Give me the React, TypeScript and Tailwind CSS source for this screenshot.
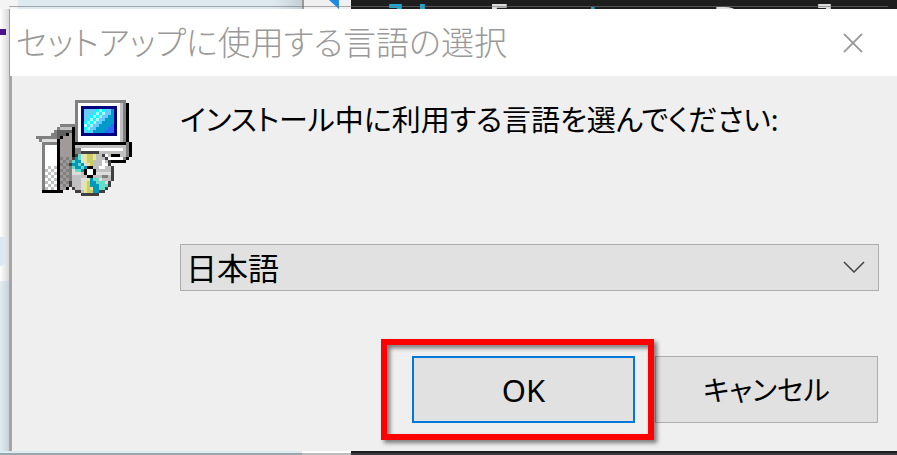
import { X } from 'lucide-react';

const INSTALLER_ROWS = [
  '.............GGGGGGGGGGGGGGGGG..',
  '.............GWWWWWWWWWWWWWWSGK.',
  '.............GWNNNNNNNNNNNNWSGK.',
  '.............GWNbbbbCwCbbBNWSGK.',
  '.............GWNbbbCwCwbbBNWSGK.',
  '.............GWNbbCwCwbbBBNWSGK.',
  '.............GWNbCwCwbbBBBNWSGK.',
  '.............GWNCwCwbbBBBBNWSGK.',
  '........GGGGGGWNwCwbbBBBBUNWSGK.',
  '.......GSSSSKGWNCwbbBBBBUUNWSGK.',
  '......GDDDDDKGWNbCbBBBBUUUNWSGK.',
  '.....GGDDDKMKGWNNNNNNNNNNNNWSGK.',
  'GGGGGGGDKMMMKGWWWWWWWWWWWWWWSGK.',
  '.GLLLLLKMMMMKGWWWWWWWWWWWWWWSGK.',
  '..GGGGGKMMMMKKKKKKKKKKKKKKKKKKGK',
  '..GWWWWKMMMMKSSSSSSSSSSSSSSSSSGK',
  '..GWWWWKMMMMKGGWWWWWWWWWWWWWWSGK',
  '..GWWWWKMMMMKGGQQQQQQSSSSSSSSSGK',
  '..GWWWWKMMMMKQALyYYySSQWSKKKSSGK',
  '..GWWWWKGMGMQTALyYYySSSQWWWWWGK.',
  '..GWWWWKMGMGATTLyYYSSSWSQKKKKK..',
  '..GWWWWKGMGQTTATLyYSSSWWQ.......',
  '..GWSWSKMGMGATTATKKSSWWSSQ......',
  '..GSWSWKGMGGLAATKWWKSSSSSQ......',
  '..GWSWSKMGMGLLLSKWWKLLLLLQ......',
  '..GSWSWKGMGGSSSSSKKSSSGGSQ......',
  '..GWSWSKMGMGSSSLLyTAALSSSQ......',
  '..GSWSWKGMGQSSSLyYTTAAALQ.......',
  '..GWSWSKMGMQSSSLyYTTTAAAQ.......',
  '..GSWSWKMMK.QSSLyYyTTAAQ........',
  '..KKKKKKK....QQSyYYTTQQ.........',
  '...............QQQQQQ...........',
];

const INSTALLER_COLORS: Record<string, string> = {
  K: '#000000',
  Q: '#404040',
  D: '#606060',
  G: '#808080',
  M: '#a09a9a',
  S: '#c0c0c0',
  L: '#dddddd',
  W: '#ffffff',
  N: '#000080',
  b: '#66ccff',
  B: '#0099cc',
  C: '#00ffff',
  w: '#b8f8ff',
  U: '#3366ff',
  T: '#0099bb',
  A: '#66dcc4',
  Y: '#cccc66',
  y: '#e6e69a',
};

function InstallerIcon() {
  return (
    <svg viewBox="0 0 32 32" className="size-24 shrink-0" shapeRendering="crispEdges" aria-hidden="true">
      {INSTALLER_ROWS.map((row, y) =>
        row.split('').map((key, x) =>
          key === '.' ? null : (
            <rect key={`${x}-${y}`} x={x} y={y} width="1" height="1" fill={INSTALLER_COLORS[key]} />
          )
        )
      )}
    </svg>
  );
}

function EditorEdge() {
  return (
    <div className="relative flex h-[9px] overflow-hidden">
      <div className="w-[18px] bg-[#f4f4f4]" />
      <div className="w-[284px] bg-linear-to-r from-[#dfeaf0] from-90% to-[#c3d0d6]" />
      <div className="w-[49px] border-l-2 border-[#999] bg-[#f0f0f0]">
        <svg viewBox="0 0 47 9" className="h-[9px] w-full" aria-hidden="true">
          <path d="M25 0h10v9z" fill="#1e88e5" />
        </svg>
      </div>
      <div className="flex-1 bg-[#1e1e1e] pl-[31px] font-['Liberation_Mono',monospace] text-[55px] leading-[60px] whitespace-pre text-[#dcdcdc]">
        <span className="text-[#1ea7d4]">lb</span> [<span className="text-[#1ea7d4]">{'  t'}</span>
        {'   D  l'}
      </div>
      <div className="absolute inset-x-[9px] top-[6px] h-px bg-[#777]/60" />
    </div>
  );
}

function BrowserEdge() {
  return (
    <div className="flex w-[9px] flex-col bg-linear-to-r from-white to-[#d8d8d8]">
      <div className="h-5" />
      <div className="mr-[3px] h-[6px] bg-[#4b128c]" />
      <div className="h-[202px]" />
      <div className="mr-[3px] h-[29px] rounded-br-md bg-[#dbe8f1]" />
      <div className="h-[15px]" />
      <div className="flex-1 bg-linear-to-r from-[#e1edf3] to-[#c6d2d8]" />
    </div>
  );
}

export default function App() {
  return (
    <div lang="ja" className="flex min-h-screen flex-col overflow-hidden bg-[#1e1e1e] text-black">
      <EditorEdge />
      <div className="flex flex-1">
        <BrowserEdge />
        <main className="flex flex-1 flex-col font-['Noto_Sans','Noto_Sans_CJK_JP',sans-serif] [font-feature-settings:'palt']">
          <header className="flex h-[67px] items-center justify-between border-l border-[#999] bg-white pr-[34px] pl-[6px]">
            <h1 className="text-[33px] leading-[40px] font-light text-[#999]">セットアップに使用する言語の選択</h1>
            <button type="button" aria-label="閉じる" className="text-[#999]">
              <X strokeWidth={1.3} viewBox="5 5 14 14" className="size-5" />
            </button>
          </header>

          <div className="flex flex-1 gap-12 border-l-3 border-[#a5a5a5] bg-[#efefef] pt-6 pr-[18px] pb-7 pl-6">
            <InstallerIcon />
            <form className="flex flex-1 flex-col">
              <label htmlFor="language" className="text-[29px] leading-[40px]">
                インストール中に利用する言語を選んでください:
              </label>

              <div className="relative mt-[104px]">
                <select
                  id="language"
                  className="block h-[47px] w-full appearance-none border border-[#adadad] bg-[#e1e1e1] px-[5px] text-[31px] leading-[40px]"
                >
                  <option>日本語</option>
                </select>
                <svg
                  viewBox="0 0 22 12"
                  className="pointer-events-none absolute top-[17px] right-[14px] h-3 w-[22px]"
                  fill="none"
                  stroke="#444"
                  strokeWidth="1.5"
                  aria-hidden="true"
                >
                  <path d="M1 1l10 10L21 1" />
                </svg>
              </div>

              <div className="mt-[65px] mr-px flex justify-end gap-5">
                <div className="relative">
                  <button
                    type="button"
                    className="h-[67px] w-[223px] border-2 border-[#0078d7] bg-[#e1e1e1] text-[31px] leading-[40px]"
                  >
                    OK
                  </button>
                  {/* Highlight around the default button */}
                  <div className="pointer-events-none absolute -top-[17px] -right-[19px] -bottom-[17px] -left-[31px] z-10 border-6 border-[#ff0000] drop-shadow-[3px_3px_2px_rgba(0,0,0,0.5)]" />
                </div>
                <button
                  type="button"
                  className="h-[67px] w-[223px] border border-[#adadad] bg-[#e1e1e1] text-[28px] leading-[40px]"
                >
                  キャンセル
                </button>
              </div>
            </form>
          </div>
        </main>
      </div>
      <div className="flex h-1">
        <div className="w-[302px] border-b-2 border-[#9aa7ad] bg-[#dcebf2]" />
        <div className="w-[49px] border-b-2 border-[#bbb] bg-white" />
        <div className="flex-1 border-b-2 border-[#3a3a3c] bg-[#1e1e1e]" />
      </div>
    </div>
  );
}
